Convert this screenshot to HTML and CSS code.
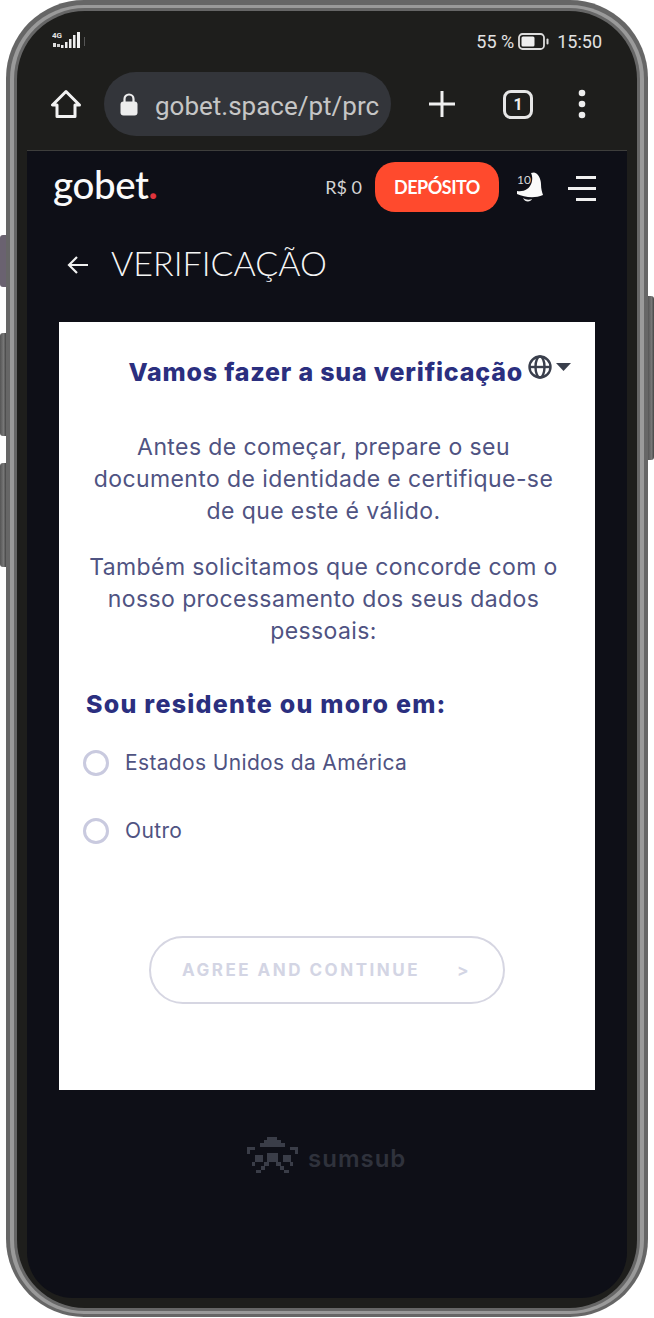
FILE: index.html
```html
<!DOCTYPE html>
<html lang="pt">
<head>
<meta charset="utf-8">
<title>Verificação</title>
<link rel="stylesheet" href="styles.css">
</head>
<body>
<div class="stage">
  <div class="rail rail-left">
    <span class="key key-a"></span>
    <span class="key key-b"></span>
    <span class="key key-c"></span>
  </div>
  <div class="frame-outer"><div class="frame-mid"><div class="frame-inner"><div class="bezel">
    <div class="status">
      <svg class="signal" width="34" height="18" viewBox="0 0 34 18">
        <text x="0" y="7" class="signal-text">4G</text>
        <rect x="1" y="12" width="3" height="4" fill="#ddd"/><rect x="5" y="13" width="3" height="3" fill="#ccc"/>
        <rect x="9" y="14" width="2.500" height="3" fill="#eee"/><rect x="13" y="11" width="2.500" height="6" fill="#eee"/>
        <rect x="17" y="8" width="2.500" height="9" fill="#eee"/><rect x="21" y="4" width="2.500" height="13" fill="#eee"/>
        <rect x="25" y="1" width="3" height="16" fill="#f2f2f2"/><rect x="32" y="6" width="1" height="9" fill="#555"/>
      </svg>
      <div class="status-right">
        <span>55 %</span>
        <svg width="31" height="17" viewBox="0 0 31 17"><rect x="1" y="1" width="25" height="15" rx="3.500" fill="none" stroke="#ddd" stroke-width="1.800"/><rect x="3.500" y="3.500" width="13" height="10" rx="1.500" fill="#eee"/><rect x="28.500" y="5.500" width="2" height="6" rx="1" fill="#ddd"/></svg>
        <span class="clock">15:50</span>
      </div>
    </div>
    <div class="toolbar">
      <svg class="home" width="30" height="30" viewBox="0 0 30 30"><path d="M15 2.500 1.500 16h4.500v11.500h18V16h4.500z" fill="none" stroke="#f2f2f2" stroke-width="3" stroke-linejoin="round"/></svg>
      <div class="omnibox">
        <svg width="18" height="23" viewBox="0 0 18 23"><path d="M4.500 9V6a4.500 4.500 0 0 1 9 0v3" fill="none" stroke="#ededed" stroke-width="2.200"/><rect x="0.500" y="8.500" width="17" height="14" rx="3" fill="#ededed"/></svg>
        <span class="url">gobet.space/pt/prc</span>
      </div>
      <svg class="plus" width="28" height="28" viewBox="0 0 28 28"><path d="M14 1v26M1 14h26" stroke="#f0f0f0" stroke-width="3"/></svg>
      <span class="tabs">1</span>
      <svg class="dots" width="8" height="30" viewBox="0 0 8 30"><circle cx="4" cy="4" r="3.300" fill="#eee"/><circle cx="4" cy="15" r="3.300" fill="#eee"/><circle cx="4" cy="26" r="3.300" fill="#eee"/></svg>
    </div>
    <main class="screen">
      <header class="topbar">
        <div class="logo">gobet<span class="logo-dot">.</span></div>
        <div class="topbar-right">
          <span class="balance">R$ 0</span>
          <button class="deposit">DEPÓSITO</button>
          <div class="bell">
            <span class="bell-count">10</span>
            <svg width="28" height="31" viewBox="0 0 28 31"><path d="M18 .5C22 1 25 7 25 12c0 5 1 8 2 11-9 4-19 2-26-1v-3C8 20 13.500 17 15.500 11 17 7 16 3 15 1z" fill="#fafafa"/><path d="M7 26c3 2 6 2 9 1-1 3-7 4-9-1z" fill="#ececec"/></svg>
          </div>
          <div class="burger"><span class="bar bar-short"></span><span class="bar"></span><span class="bar bar-short"></span></div>
        </div>
      </header>
      <div class="page-title">
        <svg width="22" height="20" viewBox="0 0 22 20"><path d="M21 10H2M10 2l-8 8 8 8" fill="none" stroke="#f0f0f0" stroke-width="2.200"/></svg>
        <h1>VERIFICAÇÃO</h1>
      </div>
      <section class="card">
        <div class="card-head">
          <h2>Vamos fazer a sua verificação</h2>
          <svg width="24" height="24" viewBox="0 0 24 24"><g fill="none" stroke="#3a3f4c" stroke-width="2.400"><circle cx="12" cy="12" r="10.500"/><ellipse cx="12" cy="12" rx="4.500" ry="10.500"/><path d="M1.500 12h21"/></g></svg>
          <svg width="15" height="8" viewBox="0 0 15 8"><path d="M0 0h15L7.500 8z" fill="#3a3f4c"/></svg>
        </div>
        <p class="intro">Antes de começar, prepare o seu documento de identidade e certifique-se de que este é válido.</p>
        <p class="intro intro-second">Também solicitamos que concorde com o nosso processamento dos seus dados pessoais:</p>
        <h3>Sou residente ou moro em:</h3>
        <div class="option"><span class="radio"></span><span>Estados Unidos da América</span></div>
        <div class="option"><span class="radio"></span><span>Outro</span></div>
        <button class="agree"><span>AGREE AND CONTINUE</span><span>&gt;</span></button>
      </section>
      <div class="sumsub">
        <svg width="51" height="40" viewBox="0 0 51 40" fill="#3a3d48">
          <path d="M20 1h10v3h4v3h4v4H13V7h4V4h3zM0 11h8v3H3v4H0zM43 11h8v7h-3v-4h-5zM20 17h11v9h3v4h3v4h-4v-4h-4v-4h-7v4h-4v4h-4v-4h3v-4h3zM8 19h8v7H8zM36 19h8v7h-8zM5 26h3v4H5zM43 26h3v4h-3zM9 34h5v3H9zM37 34h5v3h-5z"/>
        </svg>
        <span class="sumsub-name">sumsub</span>
      </div>
    </main>
  </div></div></div></div>
  <div class="rail rail-right"><span class="key key-d"></span></div>
</div>
</body>
</html>
```
FILE: styles.css
```css
* { box-sizing: border-box; }
html, body { margin: 0; padding: 0; background: #fff; }
body { font-family: "Inter", "Liberation Sans", sans-serif; }
h1, h2, h3, p { margin: 0; }
button { font: inherit; background: none; border: 0; padding: 0; }

.stage { display: flex; width: 654px; height: 1318px; overflow: hidden; }
.rail { width: 6px; display: flex; flex-direction: column; flex: none; }
.key { display: block; width: 6px; background: linear-gradient(90deg, #555 0, #777 60%, #444 100%); }
.key-a { margin-top: 235px; height: 52px; border-radius: 3px 0 0 3px; background: #6a6270; }
.key-b { margin-top: 46px; height: 103px; border-radius: 3px 0 0 3px; }
.key-c { margin-top: 27px; height: 104px; border-radius: 3px 0 0 3px; }
.key-d { margin-top: 296px; height: 164px; border-radius: 0 3px 3px 0; }

.frame-outer { width: 642px; height: 1317px; padding: 5px 4px 3px; border-radius: 78px; background: #666; flex: none; }
.frame-mid { height: 100%; padding: 3px 4px; border-radius: 74px; background: #9a9a9a; }
.frame-inner { height: 100%; padding: 3px 3px; border-radius: 71px; background: #666; }
.bezel { height: 100%; padding: 0 10px 10px; border-radius: 68px; background: #1e1e1c; display: flex; flex-direction: column; }

.status { height: 61px; flex: none; display: flex; justify-content: space-between; align-items: center; padding: 0 25px 0 25px; color: #e2e2e2; font: 400 18px "Roboto", sans-serif; }
.signal { margin-bottom: 3px; }
.signal-text { font: 700 8px "Roboto", sans-serif; fill: #e4e4e4; }
.status-right { display: flex; align-items: center; gap: 4px; }
.clock { margin-left: 4px; }

.toolbar { height: 79px; flex: none; display: flex; align-items: flex-start; padding-left: 23px; border-bottom: 1px solid #3e3e3c; }
.home { margin-top: 17px; margin-left: 1px; flex: none; }
.omnibox { width: 287px; height: 64px; margin-left: 23px; flex: none; display: flex; align-items: center; gap: 17px; padding: 0 10px 0 16px; border-radius: 32px; background: #33353a; }
.omnibox svg { flex: none; }
.url { color: #c6c6c6; font: 400 26px/32px "Roboto", sans-serif; white-space: nowrap; margin-top: 3px; }
.plus { margin: 18px 0 0 37px; flex: none; }
.tabs { width: 30px; height: 29px; margin: 18px 0 0 47px; flex: none; border: 3px solid #e6e6e6; border-radius: 8px; color: #eee; font: 700 16px/23px "Roboto", sans-serif; text-align: center; }
.dots { margin: 17px 0 0 45px; flex: none; }

.screen { flex: 1; min-height: 0; background: #0e0f17; border-radius: 0 0 46px 46px; display: flex; flex-direction: column; }
.topbar { height: 71px; flex: none; display: flex; justify-content: space-between; padding: 11px 31px 0 26px; }
.logo { color: #fafafa; font: 500 38.500px/44px "Lato", sans-serif; letter-spacing: -0.400px; }
.logo-dot { color: #e0343c; font-weight: 700; }
.topbar-right { display: flex; align-items: flex-start; }
.balance { margin-top: 14px; color: #d4d4d4; font: 400 18px/22px "Lato", sans-serif; }
.deposit { width: 124px; height: 50px; margin-left: 13px; border-radius: 20px; background: #ff4a2d; color: #fff; font: 700 18px/50px "Lato", sans-serif; letter-spacing: -0.500px; text-align: center; }
.bell { margin: 10px 0 0 17px; width: 27px; position: relative; }
.bell-count { position: absolute; left: 1px; top: 1px; color: #d8d8d8; font: 400 12px/14px "Lato", sans-serif; }
.bell svg { display: block; }
.burger { width: 28px; margin: 14px 0 0 25px; display: flex; flex-direction: column; align-items: flex-end; gap: 8px; }
.bar { display: block; width: 28px; height: 3px; background: #f0f0f0; }
.bar-short { width: 20px; }

.page-title { height: 100px; flex: none; display: flex; align-items: flex-start; padding: 21px 0 0 40px; gap: 22px; }
.page-title svg { margin-top: 12px; flex: none; }
.page-title h1 { color: #f5f5f5; font: 300 34px/40px "Lato", sans-serif; }

.card { width: 536px; height: 768px; flex: none; margin-left: 32px; background: #fff; padding: 32px 27px 0; display: flex; flex-direction: column; }
.card-head { display: flex; align-items: flex-start; justify-content: flex-end; gap: 4px; margin-right: -3px; height: 34px; }
.card-head h2 { color: #2b2f7f; font: 800 25px/36px "Inter", sans-serif; letter-spacing: 0.800px; margin-right: 1px; }
.card-head svg { margin-top: 1px; flex: none; }
.card-head svg:last-child { margin-top: 9px; }
.intro { margin: 43px 7px 0 0; color: #4f5382; font: 400 23px/32px "Inter", sans-serif; letter-spacing: 0.400px; text-align: center; }
.intro-second { margin-top: 24px; }
h3 { margin-top: 40px; color: #2b2f7f; font: 800 25px/34px "Inter", sans-serif; letter-spacing: 1.250px; }
.option { display: flex; align-items: center; gap: 16px; height: 34px; margin-top: 25px; margin-left: -3px; color: #4f5382; font: 400 21px/34px "Inter", sans-serif; letter-spacing: 0.350px; }
.option + .option { margin-top: 34px; }
.radio { width: 26px; height: 26px; flex: none; border: 3px solid #c9cadf; border-radius: 50%; }
.agree { width: 356px; height: 68px; margin: 88px 0 0 63px; padding: 0 32px 0 31px; display: flex; align-items: center; justify-content: space-between; border: 2px solid #d6d6e2; border-radius: 34px; color: #d3d5e4; font: 700 17px/20px "Inter", sans-serif; letter-spacing: 2.500px; background: #fff; }

.sumsub { margin: 46px 0 0 220px; display: flex; align-items: flex-start; gap: 10px; color: #2f323c; font: 600 24px/38px "Inter", sans-serif; letter-spacing: 1px; }
.sumsub svg { flex: none; }
.sumsub-name { margin-top: 4px; }
```
